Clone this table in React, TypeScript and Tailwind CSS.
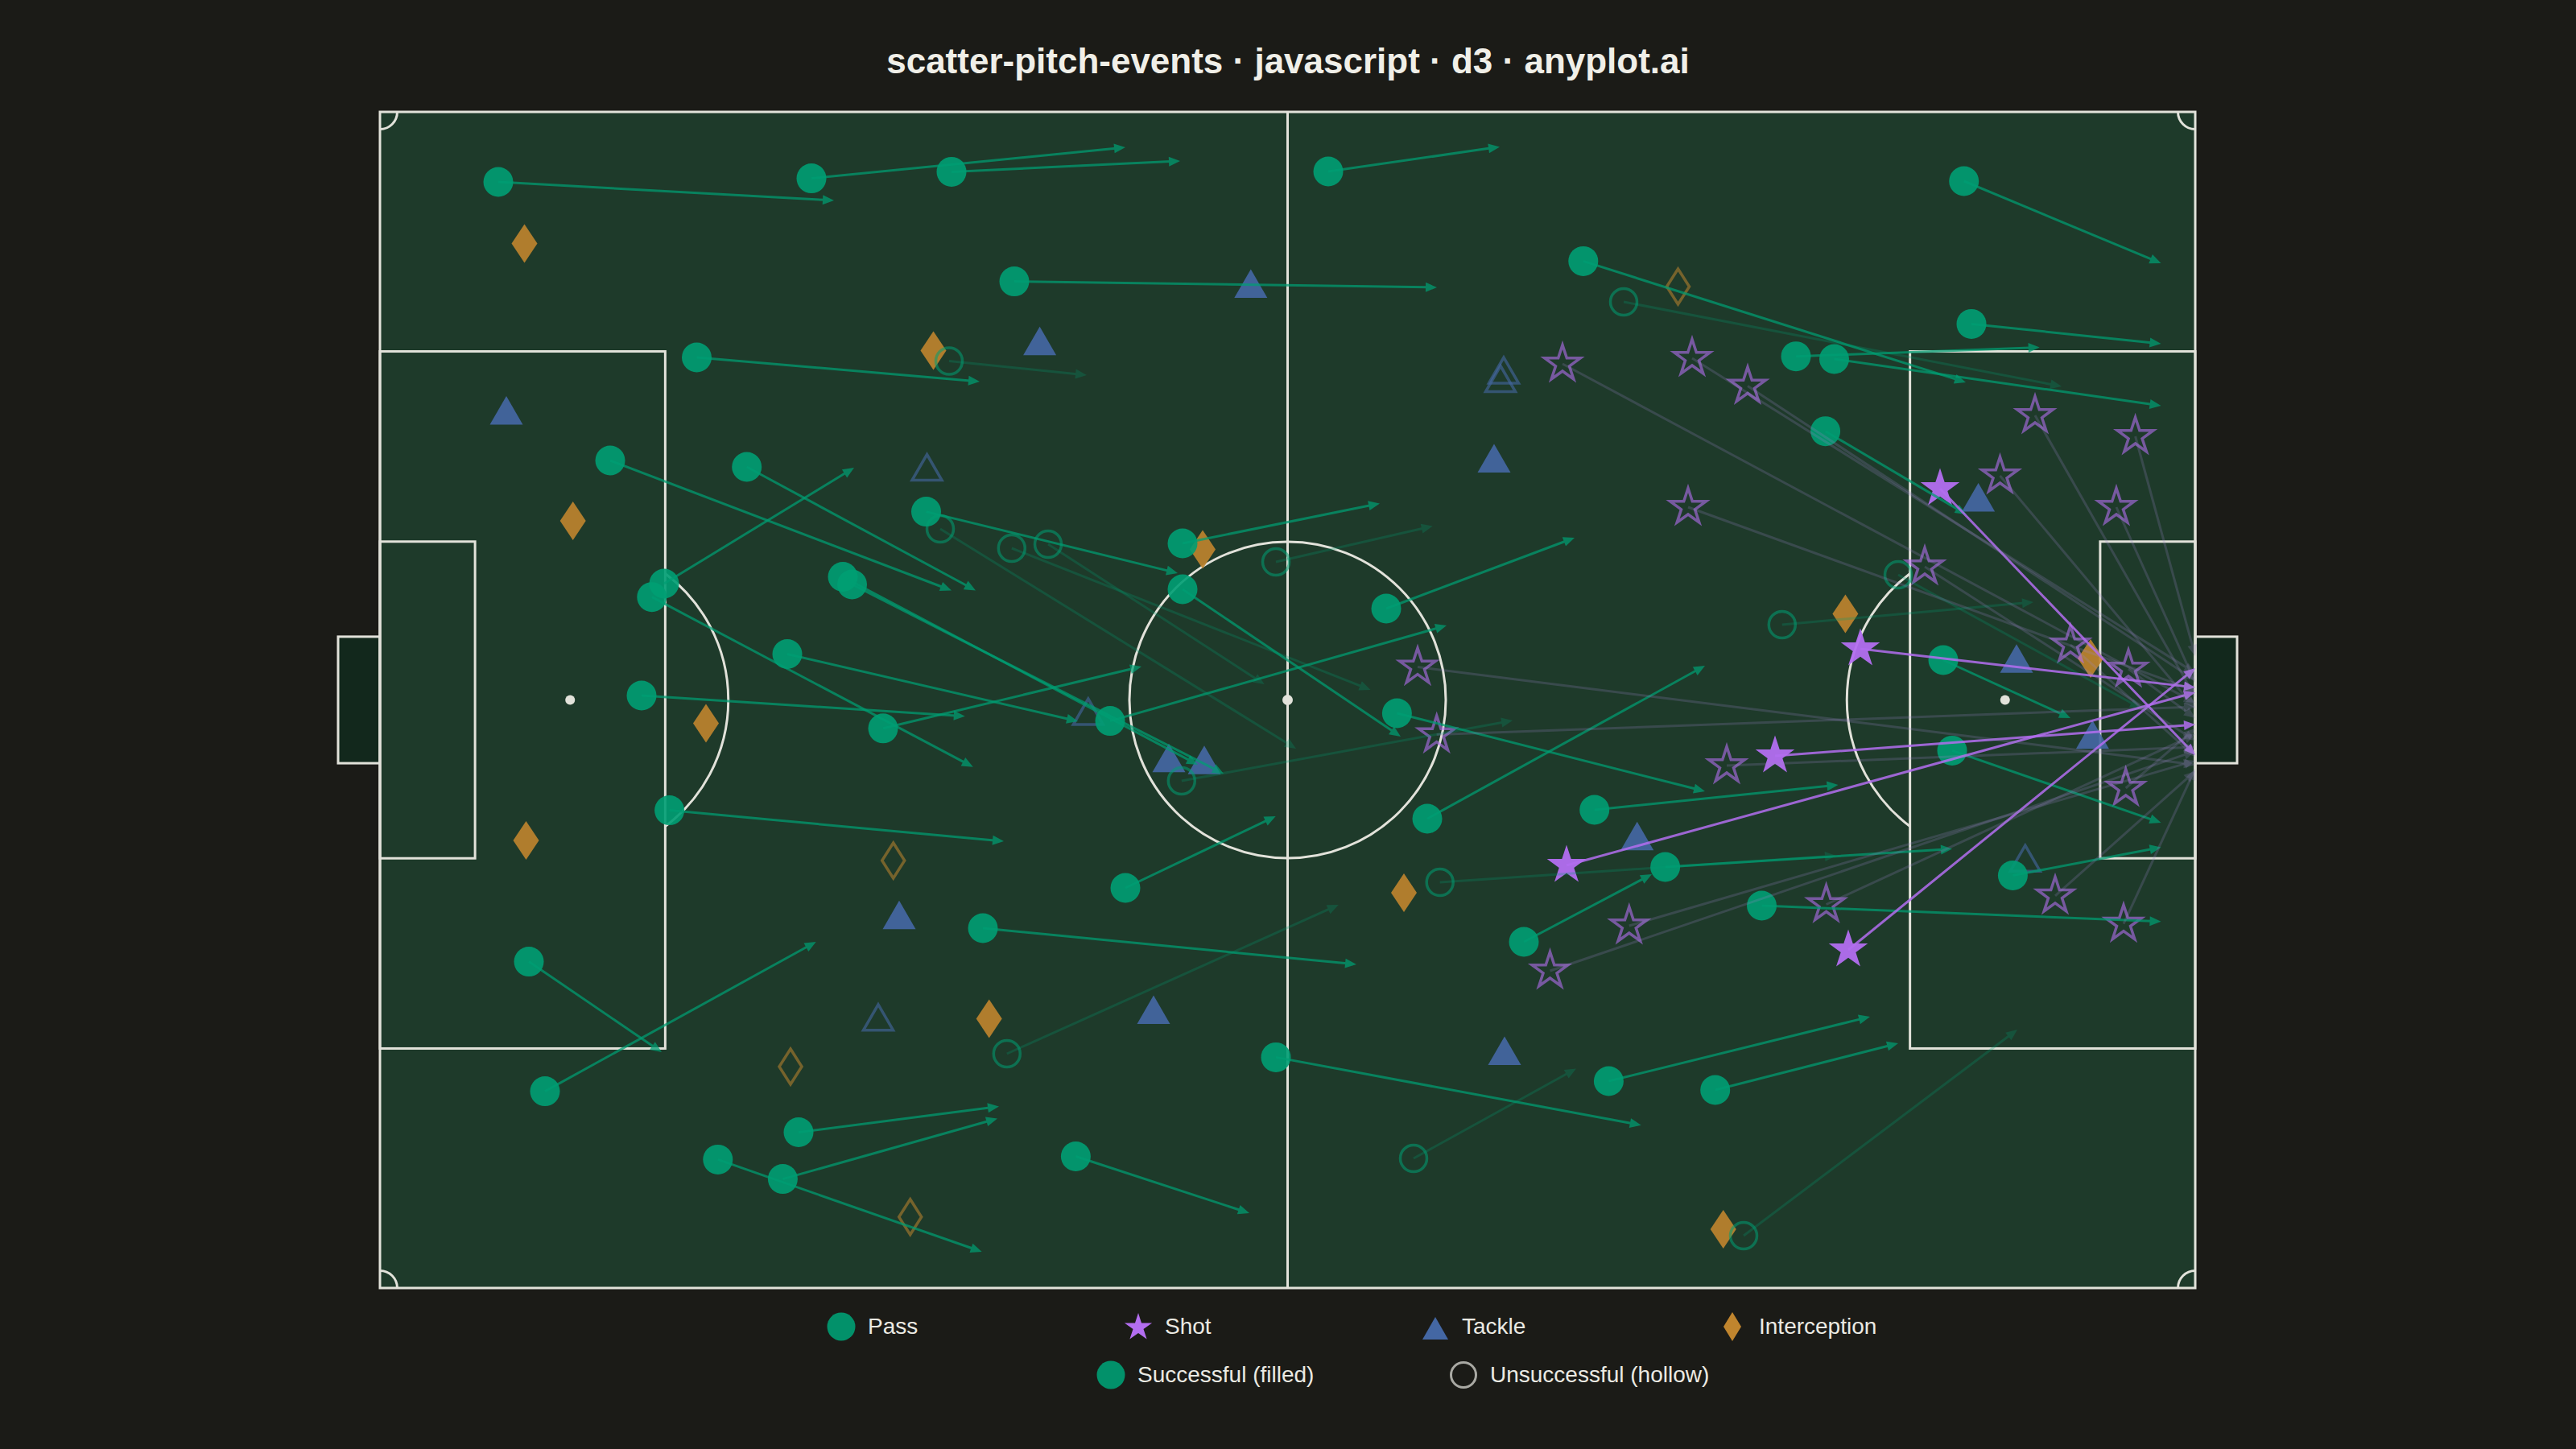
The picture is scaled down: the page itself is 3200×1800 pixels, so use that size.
import React from "react";

const PASS = "#009E73";
const SHOT = "#B36EF0";
const TACKLE = "#4467A3";
const INTER = "#C0852E";
const LINE = "#e2e2da";

type Ev = [number, number, number, number, number];

const passes: Ev[] = [
  [619, 226, 1036, 249, 1],
  [1008, 221.6, 1398, 183, 1],
  [1182, 213.4, 1466, 200, 1],
  [1260, 349.6, 1785, 357, 1],
  [865.5, 444, 1217, 474, 1],
  [758, 572, 1182, 733.5, 1],
  [927.7, 580, 1212, 733.5, 1],
  [1150.5, 635.6, 1463, 712, 1],
  [825, 725, 1061, 581, 1],
  [809.8, 741.7, 1208.8, 952.8, 1],
  [1047, 716.5, 1488, 950, 1],
  [1058.5, 726, 1520, 961, 1],
  [978, 812.5, 1339, 896, 1],
  [797, 864, 1198.8, 889.7, 1],
  [1097, 904.8, 1418, 828, 1],
  [831.6, 1006.6, 1247, 1045, 1],
  [657, 1194.6, 822, 1307, 1],
  [677, 1355.6, 1013.7, 1170, 1],
  [992, 1406.5, 1241, 1374.5, 1],
  [891.8, 1440.4, 1219.7, 1555, 1],
  [972.4, 1464.6, 1239, 1389.5, 1],
  [1336.4, 1436.5, 1552, 1507, 1],
  [1221, 1153, 1685, 1198, 1],
  [1398, 1103, 1584.7, 1014, 1],
  [1379, 895.6, 1797, 777, 1],
  [1469, 675, 1714, 625.4, 1],
  [1469, 732, 1740, 915, 1],
  [1585, 1313.4, 2038.7, 1397.7, 1],
  [1650, 213, 1863, 182.4, 1],
  [1966.8, 324.4, 2442, 475, 1],
  [2231, 442.7, 2533.7, 431.5, 1],
  [2278.5, 446, 2684.5, 504, 1],
  [2267.6, 535.7, 2442.7, 639, 1],
  [1722, 756, 1956, 668, 1],
  [1735.4, 886, 2118, 983, 1],
  [1773, 1017, 2118, 827, 1],
  [1980.7, 1006, 2283.5, 975, 1],
  [2068.6, 1077, 2425, 1054.6, 1],
  [1893, 1170, 2052, 1086, 1],
  [2188.5, 1125, 2684.5, 1144.7, 1],
  [1998.4, 1343, 2323, 1263, 1],
  [2130.7, 1354, 2358, 1296, 1],
  [2414, 820, 2572, 892, 1],
  [2425, 932.4, 2684.5, 1022, 1],
  [2500.4, 1087.5, 2684.5, 1052.6, 1],
  [2439.7, 225, 2684.5, 327, 1],
  [2449, 402.4, 2684.5, 427, 1],
  [1179, 448.5, 1350, 466, 0],
  [1168, 657, 1610, 930, 0],
  [1256.8, 681, 1702.6, 857, 0],
  [1302, 676, 1570.7, 850, 0],
  [1585, 698, 1779.7, 653.5, 0],
  [1467.8, 970, 1879, 895, 0],
  [1250.8, 1309, 1662.8, 1124, 0],
  [1756, 1439, 1958, 1327.5, 0],
  [2017, 375, 2561, 480, 0],
  [2358, 714, 2660, 880, 0],
  [2213.8, 776, 2526, 748, 0],
  [1788.7, 1096, 2281, 1063, 0],
  [2166, 1535, 2506, 1279, 0],
];

const shots: Ev[] = [
  [2410, 607, 2727, 938, 1],
  [2311, 806, 2727, 854, 1],
  [2205, 939, 2727, 900, 1],
  [1946, 1075, 2727, 860, 1],
  [2296, 1180, 2727, 830, 1],
  [1941, 452, 2727, 873, 0],
  [2102, 445, 2727, 836, 0],
  [2171, 479.5, 2727, 845, 0],
  [2097, 630, 2727, 858, 0],
  [2528, 516, 2727, 866, 0],
  [2652.6, 542, 2727, 815, 0],
  [2484.5, 591, 2727, 880, 0],
  [2629, 630, 2727, 848, 0],
  [2391, 704, 2727, 920, 0],
  [2572, 801, 2727, 940, 0],
  [2644, 831, 2727, 892, 0],
  [1761, 828.6, 2727, 950, 0],
  [1784.7, 912.6, 2727, 878, 0],
  [1925.5, 1206, 2727, 933, 0],
  [2145, 951, 2727, 928, 0],
  [2023.8, 1150, 2727, 945, 0],
  [2268.6, 1123.5, 2727, 912, 0],
  [2553, 1112.8, 2727, 958, 0],
  [2640.7, 979, 2727, 905, 0],
  [2638, 1147.7, 2727, 955, 0],
];

const tackles: [number, number, number][] = [
  [629, 509.8, 1],
  [1553.8, 352.3, 1],
  [1291.6, 423.4, 1],
  [1856, 569.2, 1],
  [2457.6, 617.8, 1],
  [2505, 818, 1],
  [1117, 1136.5, 1],
  [1452, 941.5, 1],
  [1496, 944, 1],
  [1869, 1305.2, 1],
  [1433, 1254.3, 1],
  [2599.4, 912.5, 1],
  [2033.7, 1038.5, 1],
  [1151.5, 580.5, 0],
  [1868, 460.1, 0],
  [1864, 470.5, 0],
  [1351.8, 884, 0],
  [1091, 1263.8, 0],
  [2515.8, 1066.2, 0],
];

const inters: [number, number, number][] = [
  [651.5, 302.6, 1],
  [1159.5, 435.4, 1],
  [711.7, 647, 1],
  [1494, 682.6, 1],
  [877, 898.5, 1],
  [653.5, 1044, 1],
  [1228.7, 1265.4, 1],
  [1744, 1109, 1],
  [2292.4, 762.6, 1],
  [2597, 818, 1],
  [2140.7, 1527, 1],
  [2084.5, 356, 0],
  [1109.7, 1069, 0],
  [982, 1325, 0],
  [1130.7, 1511.7, 0],
];

function starPts(cx: number, cy: number, R: number) {
  const r = R * 0.382;
  const pts: string[] = [];
  for (let i = 0; i < 10; i++) {
    const a = -Math.PI / 2 + (i * Math.PI) / 5;
    const rr = i % 2 === 0 ? R : r;
    pts.push(`${(cx + rr * Math.cos(a)).toFixed(1)},${(cy + rr * Math.sin(a)).toFixed(1)}`);
  }
  return pts.join(" ");
}

function triPts(cx: number, cy: number, w: number, h: number) {
  return `${cx},${cy - h / 2} ${cx + w / 2},${cy + h / 2} ${cx - w / 2},${cy + h / 2}`;
}

function diaPts(cx: number, cy: number, w: number, h: number) {
  return `${cx},${cy - h / 2} ${cx + w / 2},${cy} ${cx},${cy + h / 2} ${cx - w / 2},${cy}`;
}

function ArrowLine({ e, color, opacity }: { e: Ev; color: string; opacity: number }) {
  const [x1, y1, x2, y2] = e;
  const dx = x2 - x1;
  const dy = y2 - y1;
  const len = Math.hypot(dx, dy) || 1;
  const ux = dx / len;
  const uy = dy / len;
  const L = 14;
  const W = 6;
  const bx = x2 - ux * L;
  const by = y2 - uy * L;
  const p = `${x2},${y2} ${bx - uy * W},${by + ux * W} ${bx + uy * W},${by - ux * W}`;
  return (
    <g opacity={opacity}>
      <line x1={x1} y1={y1} x2={bx + ux * 2} y2={by + uy * 2} stroke={color} strokeWidth={3} />
      <polygon points={p} fill={color} />
    </g>
  );
}

function Pitch() {
  const x0 = 472;
  const y0 = 139;
  const w = 2255;
  const h = 1461;
  const x1 = x0 + w;
  const y1 = y0 + h;
  const cx = x0 + w / 2;
  const cy = y0 + h / 2;
  const s = w / 105;
  const pbD = 16.5 * s;
  const pbW = 40.32 * s;
  const sbD = 5.5 * s;
  const sbW = 18.32 * s;
  const spot = 11 * s;
  const R = 9.15 * s;
  const gW = 7.32 * s;
  const gD = 52;
  const arcDx = pbD - spot;
  const arcDy = Math.sqrt(R * R - arcDx * arcDx);
  const cr = 1 * s;
  return (
    <g>
      <rect x={x0 - gD} y={cy - gW / 2} width={gD} height={gW} fill="#12281c" stroke={LINE} strokeWidth={3} />
      <rect x={x1} y={cy - gW / 2} width={gD} height={gW} fill="#12281c" stroke={LINE} strokeWidth={3} />
      <rect x={x0} y={y0} width={w} height={h} fill="#1e3a2a" stroke={LINE} strokeWidth={3} />
      <line x1={cx} y1={y0} x2={cx} y2={y1} stroke={LINE} strokeWidth={3} />
      <circle cx={cx} cy={cy} r={R} fill="none" stroke={LINE} strokeWidth={3} />
      <circle cx={cx} cy={cy} r={6.5} fill={LINE} />
      <rect x={x0} y={cy - pbW / 2} width={pbD} height={pbW} fill="none" stroke={LINE} strokeWidth={3} />
      <rect x={x0} y={cy - sbW / 2} width={sbD} height={sbW} fill="none" stroke={LINE} strokeWidth={3} />
      <rect x={x1 - pbD} y={cy - pbW / 2} width={pbD} height={pbW} fill="none" stroke={LINE} strokeWidth={3} />
      <rect x={x1 - sbD} y={cy - sbW / 2} width={sbD} height={sbW} fill="none" stroke={LINE} strokeWidth={3} />
      <circle cx={x0 + spot} cy={cy} r={6} fill={LINE} />
      <circle cx={x1 - spot} cy={cy} r={6} fill={LINE} />
      <path
        d={`M ${x0 + pbD} ${cy - arcDy} A ${R} ${R} 0 0 1 ${x0 + pbD} ${cy + arcDy}`}
        fill="none"
        stroke={LINE}
        strokeWidth={3}
      />
      <path
        d={`M ${x1 - pbD} ${cy - arcDy} A ${R} ${R} 0 0 0 ${x1 - pbD} ${cy + arcDy}`}
        fill="none"
        stroke={LINE}
        strokeWidth={3}
      />
      <path d={`M ${x0 + cr} ${y0} A ${cr} ${cr} 0 0 1 ${x0} ${y0 + cr}`} fill="none" stroke={LINE} strokeWidth={3} />
      <path d={`M ${x1 - cr} ${y0} A ${cr} ${cr} 0 0 0 ${x1} ${y0 + cr}`} fill="none" stroke={LINE} strokeWidth={3} />
      <path d={`M ${x0} ${y1 - cr} A ${cr} ${cr} 0 0 1 ${x0 + cr} ${y1}`} fill="none" stroke={LINE} strokeWidth={3} />
      <path d={`M ${x1} ${y1 - cr} A ${cr} ${cr} 0 0 0 ${x1 - cr} ${y1}`} fill="none" stroke={LINE} strokeWidth={3} />
    </g>
  );
}

function Markers() {
  return (
    <g>
      {inters.map(([x, y, ok], i) =>
        ok ? (
          <polygon key={`i${i}`} points={diaPts(x, y, 32, 48)} fill={INTER} opacity={0.9} />
        ) : (
          <polygon key={`i${i}`} points={diaPts(x, y, 28, 44)} fill="none" stroke={INTER} strokeWidth={3.5} opacity={0.55} />
        )
      )}
      {tackles.map(([x, y, ok], i) =>
        ok ? (
          <polygon key={`t${i}`} points={triPts(x, y, 41, 35.5)} fill={TACKLE} opacity={0.92} />
        ) : (
          <polygon key={`t${i}`} points={triPts(x, y, 37, 32)} fill="none" stroke={TACKLE} strokeWidth={3.5} opacity={0.6} />
        )
      )}
      {passes.map(([x, y, , , ok], i) =>
        ok ? (
          <circle key={`p${i}`} cx={x} cy={y} r={18.5} fill={PASS} opacity={0.9} />
        ) : (
          <circle key={`p${i}`} cx={x} cy={y} r={16.5} fill="none" stroke={PASS} strokeWidth={3.5} opacity={0.55} />
        )
      )}
      {shots.map(([x, y, , , ok], i) =>
        ok ? (
          <polygon key={`s${i}`} points={starPts(x, y, 25.5)} fill={SHOT} opacity={0.95} />
        ) : (
          <polygon key={`s${i}`} points={starPts(x, y, 23.5)} fill="none" stroke={SHOT} strokeWidth={3.5} strokeLinejoin="miter" opacity={0.6} />
        )
      )}
    </g>
  );
}

function Lines() {
  return (
    <g>
      {passes.map((e, i) => (
        <ArrowLine key={`pl${i}`} e={e} color={PASS} opacity={e[4] ? 0.72 : 0.25} />
      ))}
      {shots.map((e, i) => (
        <ArrowLine key={`sl${i}`} e={e} color={e[4] ? SHOT : "#9a86c8"} opacity={e[4] ? 0.85 : 0.22} />
      ))}
    </g>
  );
}

function LegendItem({ icon, label, width }: { icon: React.ReactNode; label: string; width: string }) {
  return (
    <div className={`flex items-center ${width}`}>
      <svg width="36" height="36" viewBox="0 0 36 36" className="shrink-0">
        {icon}
      </svg>
      <span className="ml-[15px] text-[28px] leading-none text-[#ebeae3]">{label}</span>
    </div>
  );
}

export default function App() {
  return (
    <div
      className="w-[3200px] h-[1800px] bg-[#1b1b17] overflow-hidden flex flex-col items-center"
      style={{ fontFamily: '"Liberation Sans", Arial, sans-serif' }}
    >
      <div className="h-[130px] w-full pt-[54px] text-center text-[44px] leading-[44px] font-bold text-[#f0efe8]">
        scatter-pitch-events · javascript · d3 · anyplot.ai
      </div>
      <svg width="2400" height="1480" viewBox="400 130 2400 1480" className="block shrink-0">
        <Pitch />
        <Markers />
        <Lines />
      </svg>
      <div className="w-full mt-[20px] flex pl-[1027px]">
        <LegendItem width="w-[369px]" label="Pass" icon={<circle cx="18" cy="18" r="17.5" fill={PASS} opacity={0.9} />} />
        <LegendItem width="w-[369px]" label="Shot" icon={<polygon points={starPts(18, 19, 18)} fill={SHOT} />} />
        <LegendItem width="w-[369px]" label="Tackle" icon={<polygon points={triPts(18, 20, 32, 28)} fill={TACKLE} />} />
        <LegendItem width="w-[369px]" label="Interception" icon={<polygon points={diaPts(18, 18, 22, 36)} fill={INTER} />} />
      </div>
      <div className="w-full mt-[24px] flex pl-[1362px]">
        <LegendItem width="w-[438px]" label="Successful (filled)" icon={<circle cx="18" cy="18" r="17.5" fill={PASS} opacity={0.9} />} />
        <LegendItem
          width="w-[438px]"
          label="Unsuccessful (hollow)"
          icon={<circle cx="18" cy="18" r="15.5" fill="none" stroke="#a9a9a3" strokeWidth={3} />}
        />
      </div>
    </div>
  );
}
